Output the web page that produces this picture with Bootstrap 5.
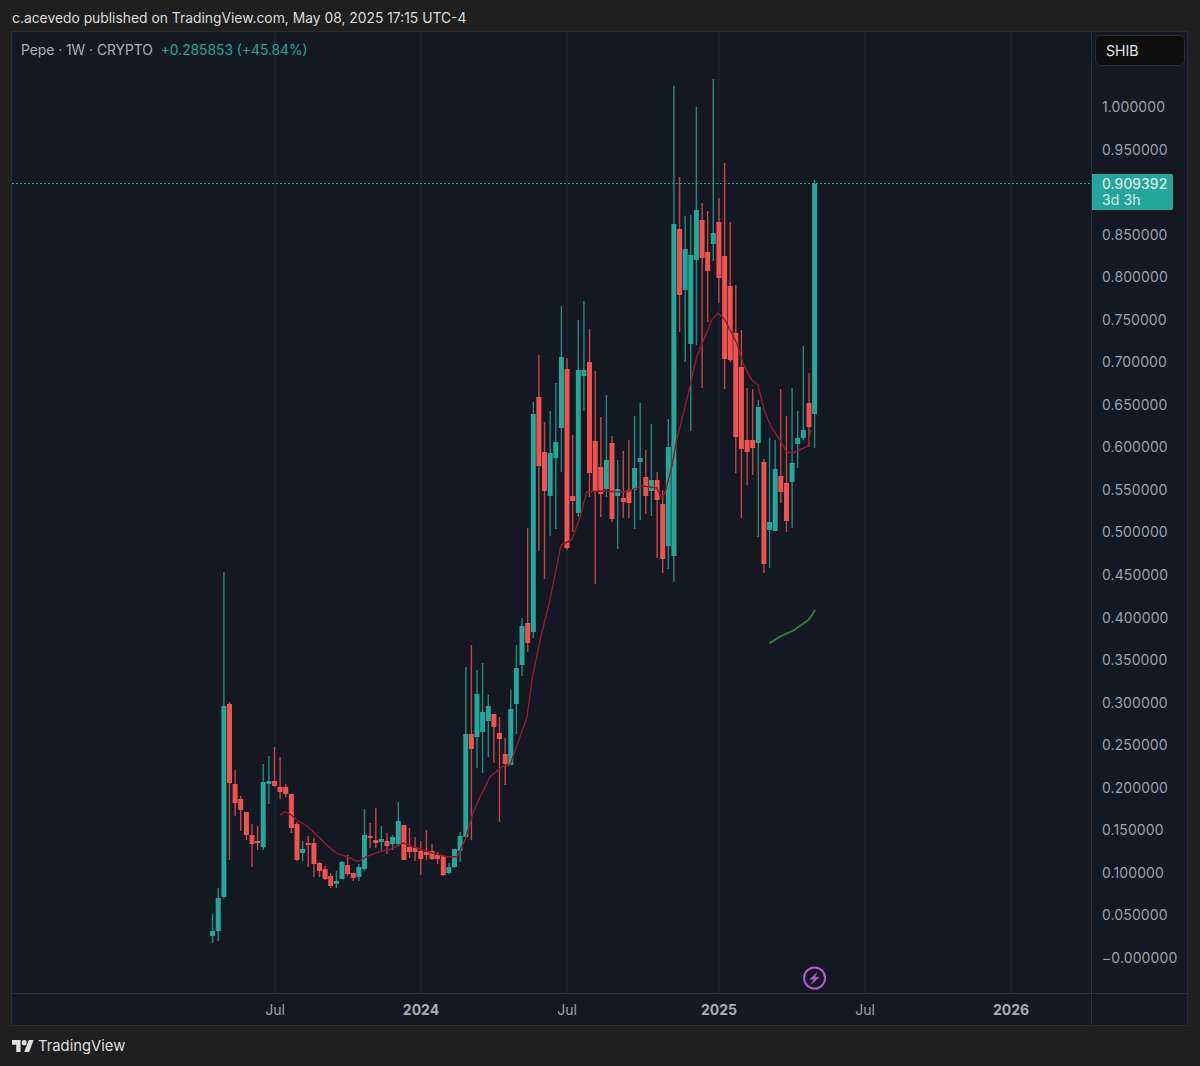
<!DOCTYPE html>
<html lang="en">
<head>
    <meta charset="UTF-8">
    <title>Pepe 1W chart</title>
    <link href="https://cdn.jsdelivr.net/npm/bootstrap@5.3.3/dist/css/bootstrap.min.css" rel="stylesheet">
    <style>
        body { background: #1f1f1f; font-family: Inter, "Liberation Sans", sans-serif; font-size: 14px; height: 1066px; overflow: hidden; }
        .snap-title { height: 31px; padding: 9px 0 0 12px; line-height: 18px; color: #dcdcdc; font-size: 13.85px; }
        .chart-frame { margin: 0 12px 0 11px; border: 1px solid #2b2b2d; background: #131822; height: 995px; }
        .chart-pane { height: 961px; }
        .chart-pane svg { display: block; width: 1079px; height: 961px; }
        .legend { top: 9px; left: 9px; line-height: 18px; color: #aeb2bb; font-size: 13.8px; }
        .legend .change { color: #26a69a; margin-left: 4px; }
        .price-scale { width: 96px; border-left: 1px solid #2a2e39; }
        .symbol-box { height: 31px; width: 90px; margin: 3px 0 0 3px; padding-left: 10px; line-height: 29px; background: #0f0f0f; border: 1px solid #2a2a2d; border-radius: 6px; color: #e6e6e6; }
        .price-labels { padding-top: 20px; padding-left: 10px; color: #9da1ab; letter-spacing: .1px; }
        .price-labels div { height: 42.55px; line-height: 42.55px; }
        .last-price { top: 142px; left: 0; width: 81px; height: 36px; padding: 2px 0 0 10px; line-height: 15.5px; background: #26a69a; color: #e8f6f4; border-radius: 0 2px 2px 0; letter-spacing: .1px; }
        .last-price span { display: block; color: #cfeeea; }
        .time-axis { height: 32px; border-top: 1px solid #2a2e39; }
        .time-labels { width: 1079px; padding-left: 233px; gap: 86px; color: #9da1ab; line-height: 32px; }
        .time-labels div { width: 60px; text-align: center; }
        .time-labels .year { font-weight: 700; color: #a9adb6; }
        .time-labels .shift { margin-left: 6px; }
        .time-corner { border-left: 1px solid #2a2e39; width: 96px; }
        .tv-brand { padding: 10px 0 0 12px; gap: 4px; color: #dedede; font-size: 14.8px; line-height: 20px; }
        .tv-brand svg { width: 22px; height: 12px; fill: #dedede; }
    </style>
    <script src="https://cdn.jsdelivr.net/npm/bootstrap@5.3.3/dist/js/bootstrap.bundle.min.js"></script>
</head>
<body>

<div class="snap-title">c.acevedo published on TradingView.com, May 08, 2025 17:15 UTC-4</div>

<div class="chart-frame">
    <div class="d-flex">
        <div class="chart-pane position-relative">
            <svg id="chart" viewBox="12 32 1079 961" xmlns="http://www.w3.org/2000/svg"></svg>
            <div class="legend position-absolute">Pepe · 1W · CRYPTO <span class="change">+0.285853 (+45.84%)</span></div>
        </div>
        <div class="price-scale position-relative">
            <div class="symbol-box">SHIB</div>
            <div class="price-labels">
                <div>1.000000</div>
                <div>0.950000</div>
                <div></div>
                <div>0.850000</div>
                <div>0.800000</div>
                <div>0.750000</div>
                <div>0.700000</div>
                <div>0.650000</div>
                <div>0.600000</div>
                <div>0.550000</div>
                <div>0.500000</div>
                <div>0.450000</div>
                <div>0.400000</div>
                <div>0.350000</div>
                <div>0.300000</div>
                <div>0.250000</div>
                <div>0.200000</div>
                <div>0.150000</div>
                <div>0.100000</div>
                <div>0.050000</div>
                <div>−0.000000</div>
            </div>
            <div class="last-price position-absolute">0.909392<span>3d 3h</span></div>
        </div>
    </div>
    <div class="time-axis d-flex">
        <div class="time-labels d-flex">
            <div>Jul</div>
            <div class="year">2024</div>
            <div>Jul</div>
            <div class="year shift">2025</div>
            <div>Jul</div>
            <div class="year">2026</div>
        </div>
        <div class="time-corner"></div>
    </div>
</div>

<div class="tv-brand d-flex align-items-center">
    <svg viewBox="0 4 36 18" preserveAspectRatio="none" xmlns="http://www.w3.org/2000/svg">
        <path d="M14 22H7V11H0V4h14v18zM28 22h-8l7.5-18h8L28 22z"></path>
        <circle cx="20" cy="8" r="4"></circle>
    </svg>
    <span>TradingView</span>
</div>

<script>
    const GREEN = "#26a69a";
    const RED = "#ef5350";
    const FIRST_X = 212.6;
    const STEP_X = 5.626;

    // weekly candles, screen y values: high, body top, body bottom, low, g/r
    const candles = [
        [914,931,936,943,"g"],[888,898,931,941,"g"],[572,706,897,899,"g"],[702,704,783,860,"r"],
        [770,784,803,816,"r"],[796,799,810,831,"r"],[812,812,835,840,"r"],[824,835,844,867,"r"],
        [826,841,843,850,"r"],[764,782,847,850,"g"],[756,781,784,804,"g"],[747,781,786,787,"r"],
        [757,787,792,799,"r"],[784,787,794,797,"r"],[794,794,828,833,"r"],[822,824,860,861,"r"],
        [841,849,853,861,"g"],[836,843,845,867,"r"],[838,843,864,877,"r"],[862,863,871,877,"r"],
        [866,869,879,880,"r"],[873,876,886,888,"r"],[871,881,884,888,"g"],[861,862,879,879,"g"],
        [855,865,874,876,"r"],[873,873,878,881,"r"],[864,867,877,881,"g"],[809,835,869,871,"g"],
        [823,836,838,848,"r"],[808,840,843,848,"r"],[826,839,842,852,"g"],[833,841,846,854,"r"],
        [835,837,844,850,"g"],[802,821,844,847,"g"],[825,825,860,860,"r"],[828,847,852,858,"r"],
        [837,848,852,861,"r"],[841,851,859,875,"r"],[830,852,855,860,"r"],[844,851,859,860,"r"],
        [852,855,859,864,"r"],[855,856,875,876,"r"],[863,867,873,874,"g"],[849,849,867,868,"g"],
        [832,836,851,862,"g"],[667,734,837,838,"g"],[645,734,749,840,"r"],[670,694,737,768,"g"],
        [663,712,732,773,"g"],[695,706,721,757,"g"],[714,714,727,763,"r"],[717,733,739,822,"r"],
        [738,754,764,785,"r"],[690,709,765,765,"g"],[645,668,704,734,"g"],[618,626,665,676,"g"],
        [528,623,643,652,"r"],[402,414,632,638,"g"],[355,397,466,551,"r"],[422,452,491,579,"r"],
        [411,453,496,536,"g"],[383,442,458,529,"g"],[306,357,428,472,"g"],[358,369,548,550,"r"],
        [435,496,501,532,"r"],[320,370,513,517,"g"],[301,370,376,411,"g"],[329,362,473,497,"r"],
        [371,441,491,584,"r"],[417,467,494,517,"r"],[395,460,489,497,"g"],[436,443,519,522,"r"],
        [460,489,496,549,"g"],[451,498,502,518,"r"],[440,490,503,518,"r"],[416,468,490,529,"g"],
        [403,458,462,520,"g"],[450,477,496,514,"r"],[424,480,491,516,"g"],[472,480,500,558,"r"],
        [490,504,559,573,"r"],[419,447,546,569,"g"],[86,224,556,582,"g"],[177,229,295,332,"r"],
        [216,249,290,362,"g"],[215,255,344,431,"g"],[107,210,260,345,"g"],[203,220,258,388,"r"],
        [211,252,271,322,"r"],[79,233,244,261,"g"],[198,222,278,303,"r"],[163,256,359,389,"r"],
        [222,286,360,362,"r"],[285,333,437,473,"r"],[330,367,449,518,"r"],[388,440,452,485,"r"],
        [389,440,448,475,"r"],[400,407,443,537,"g"],[459,462,564,573,"r"],[438,522,530,568,"g"],
        [440,469,531,531,"g"],[389,476,492,503,"r"],[416,483,521,532,"r"],[388,463,482,528,"g"],
        [411,438,444,468,"g"],[346,430,438,440,"g"],[373,403,427,447,"r"],[180,184,414,448,"g"]
    ];

    const redLine = "280.3,815 285,811.7 290,814 296.7,820 306.7,825.7 316.7,835 326.7,845 336.7,853.3 346.7,856.7 358,861.5 368,856 380,851.7 390,849.3 403,843 420,849 433,853 447,856.7 457,856.7 465,840 473,813 480,797 490,777 503,766 510,765 527,717 532,680 540,640 550,600 561,545 571.7,540 580,517 586.7,492 600,491 616.7,491.7 626.7,491.7 643,486 656.7,488 661.7,498 665,493 671.7,467 676.7,440 686.7,400 696.7,357 711.7,320 718.3,313 725,320 736.7,343 743,363 751.7,380 758,385 765,413 771.7,428 778,437 786.7,452 793,453 808,446 810.7,430";
    const greenLine = "769.3,643.3 780,636.7 793,630.7 808.3,620 812,615 815,610";

    let parts = [];
    [275, 421, 567, 719, 865, 1011].forEach(x => {
        parts.push(`<line x1="${x}" x2="${x}" y1="32" y2="993" stroke="#232834" stroke-width="1"/>`);
    });
    parts.push(`<line x1="12" x2="1091" y1="183.5" y2="183.5" stroke="${GREEN}" stroke-width="1" stroke-dasharray="2 2"/>`);

    candles.forEach((c, i) => {
        const x = FIRST_X + i * STEP_X;
        const color = c[4] === "g" ? GREEN : RED;
        parts.push(`<rect x="${(x - 0.7).toFixed(1)}" y="${c[0]}" width="1.4" height="${c[3] - c[0]}" fill="${color}" opacity="0.8"/>`);
        parts.push(`<rect x="${(x - 2.5).toFixed(1)}" y="${c[1]}" width="5" height="${Math.max(c[2] - c[1], 2)}" fill="${color}"/>`);
    });

    parts.push(`<polyline points="${redLine}" fill="none" stroke="#8f1c2a" stroke-width="1.4"/>`);
    parts.push(`<polyline points="${greenLine}" fill="none" stroke="#2e7d3a" stroke-width="2"/>`);
    parts.push(`<circle cx="814.6" cy="978" r="10.5" fill="none" stroke="#b65bc9" stroke-width="2"/>`);
    parts.push(`<path d="M817 972.5 L810 979.2 L814 979.2 L811 984.5 L819 977.3 L814.8 977.3 Z" fill="#b65bc9" stroke="#b65bc9" stroke-width="0.5"/>`);
    document.getElementById("chart").innerHTML = parts.join("");
</script>
</body>
</html>
